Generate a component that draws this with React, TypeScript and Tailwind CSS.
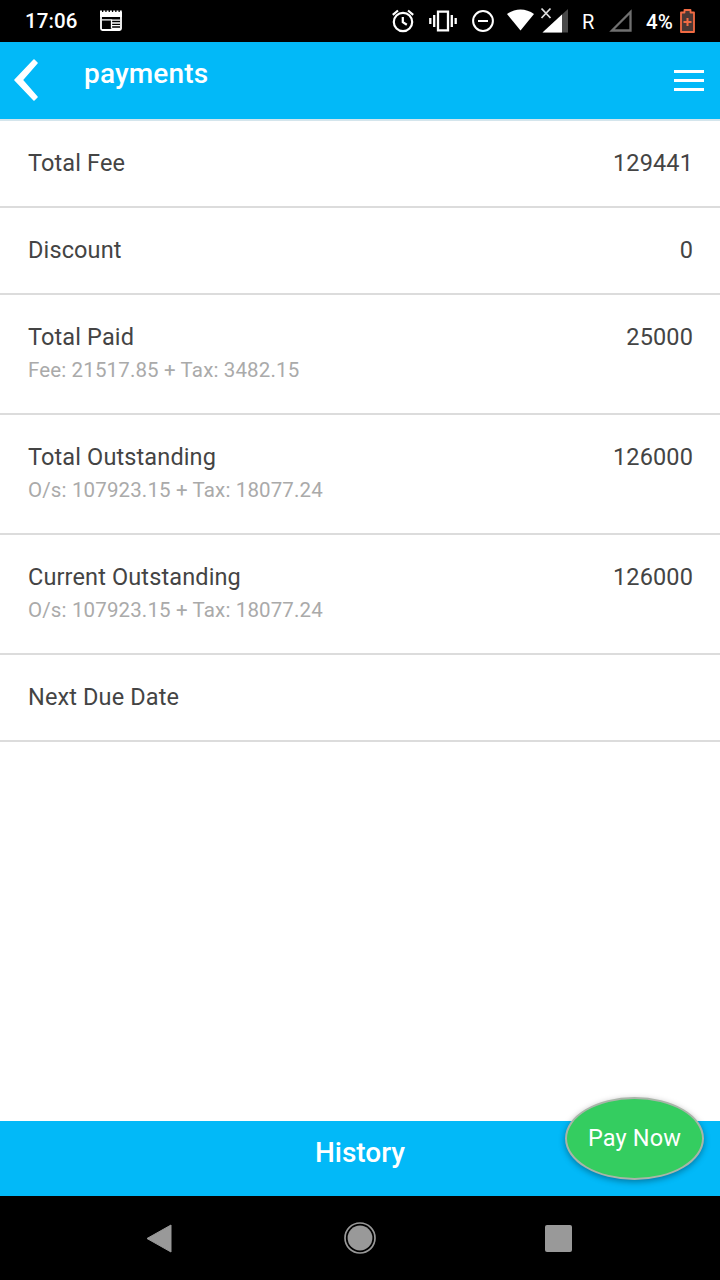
type FeeRow = {
  label: string;
  value?: string;
  detail?: string;
};

const rows: FeeRow[] = [
  { label: "Total Fee", value: "129441" },
  { label: "Discount", value: "0" },
  { label: "Total Paid", value: "25000", detail: "Fee: 21517.85 + Tax: 3482.15" },
  { label: "Total Outstanding", value: "126000", detail: "O/s: 107923.15 + Tax: 18077.24" },
  { label: "Current Outstanding", value: "126000", detail: "O/s: 107923.15 + Tax: 18077.24" },
  { label: "Next Due Date" },
];

function StatusBar() {
  return (
    <div className="flex h-[42px] items-center bg-black pl-[25px] text-[20.5px] font-medium text-white">
      <span className="mt-px w-[75px] tracking-[0.1px]">17:06</span>
      <svg className="-mt-px" width="22" height="21" viewBox="0 0 22 21" fill="none">
        <path d="M1 5v13.5A1.5 1.5 0 0 0 2.5 20h17a1.5 1.5 0 0 0 1.5-1.5V5" stroke="#fff" strokeWidth="1.8" />
        <path d="M0 2h22v5H0z" fill="#fff" />
        <path d="M0 1.2h22" stroke="#fff" strokeWidth="1.6" strokeDasharray="2 1.3" />
        <path d="M2 9.8h9.5v9M12 10.2h8M12 13h8M12 15.7h8M12 18.3h8" stroke="#fff" strokeWidth="1.3" />
      </svg>

      <div className="ml-auto flex h-full items-center">
        <svg className="mr-[15px]" width="22" height="24" viewBox="0 0 22 24" fill="none" stroke="#fff" strokeWidth="2.2">
          <circle cx="11" cy="13" r="9.2" />
          <path d="M.8 5.8L6 1.5M21.2 5.8L16 1.5M10.8 8v5.2l4 2.5" />
        </svg>
        <svg className="mr-[15px]" width="28" height="22" viewBox="0 0 28 22" fill="none" stroke="#fff" strokeWidth="2.3">
          <path d="M9 1.7h10v18.6H9zM5.2 5v12M1.3 8v6M22.8 5v12M26.7 8v6" />
        </svg>
        <svg className="mr-[13px]" width="22" height="22" viewBox="0 0 22 22" fill="none" stroke="#fff" strokeWidth="2">
          <circle cx="11" cy="11" r="9.9" />
          <path d="M6 11h10" />
        </svg>
        <svg className="mr-[6px] -mt-[2px]" width="27" height="22" viewBox="0 0 27 22" fill="#fff">
          <path d="M0 5C8-1 19-1 27 5L13.5 21.5z" />
        </svg>
        <svg className="mr-[13px] -mt-[2px]" width="29" height="26" viewBox="0 0 29 26">
          <path d="M2.5 25.5L28 2v23.5z" fill="#4a4a4a" />
          <path d="M2.5 25.5L22 7.5v18z" fill="#fff" />
          <path d="M1.5 1.5l9 9.5M10.5 1.5l-9 9.5" stroke="#ddd" strokeWidth="1.8" fill="none" />
        </svg>
        <span className="mr-[15px] mt-[2px] w-[12px] text-[20px] leading-none font-normal">R</span>
        <svg className="mr-[14px] -mt-[2px]" width="23" height="23" viewBox="0 0 23 23" fill="none">
          <path d="M3 21.5L21.5 3v18.5z" stroke="#707070" strokeWidth="2.3" />
        </svg>
        <span className="mt-[2px] w-[34px] text-[20.5px]">4%</span>
        <svg className="mr-[25px]" width="15" height="24" viewBox="0 0 15 24">
          <path d="M1 3.5h3.5V1h6v2.5H14V23H1z" fill="#4a3835" stroke="#f26b43" strokeWidth="1.8" strokeLinejoin="round" />
          <path d="M7.5 9v8M3.5 13h8" stroke="#f26b43" strokeWidth="2" />
        </svg>
      </div>
    </div>
  );
}

function Header() {
  return (
    <header className="flex h-[79px] border-b-2 border-[#d4e5ec] bg-[#02b9f8] text-white">
      <svg className="mt-[17px] ml-[14px]" width="25" height="43" viewBox="0 0 25 43">
        <path
          d="M20 1L1 21l19 20 3-3L8.2 21 23 4z"
          fill="#fff"
          stroke="#fff"
          strokeWidth="1.6"
          strokeLinejoin="round"
        />
      </svg>
      <h1 className="mt-[16px] ml-[45px] text-[28px] leading-8 font-medium tracking-[0.15px]">payments</h1>
      <button className="mt-7 mr-4 ml-auto flex h-[23px] w-[30px] flex-col gap-[6px]">
        <span className="h-[3px] w-full bg-white" />
        <span className="h-[3px] w-full bg-white" />
        <span className="h-[3px] w-full bg-white" />
      </button>
    </header>
  );
}

function Row({ label, value, detail }: FeeRow) {
  return (
    <li
      className={`flex justify-between border-b-2 border-[#dcdcdc] pt-[26px] pr-[27px] pl-7 text-[23.5px] leading-[33px] tracking-[0.13px] text-[#444] ${
        detail ? "h-[120px]" : "h-[87px]"
      }`}
    >
      <div>
        <p>{label}</p>
        {detail && <p className="text-[20.5px] tracking-[0.14px] text-[#aaa]">{detail}</p>}
      </div>
      <span>{value}</span>
    </li>
  );
}

function NavBar() {
  return (
    <nav className="flex h-[84px] items-center bg-black">
      <svg className="ml-[146px]" width="26" height="29" viewBox="0 0 26 29">
        <path d="M25 1v27L1 14.5z" fill="#999" stroke="#999" strokeLinejoin="round" />
      </svg>
      <svg className="ml-[172px]" width="32" height="32" viewBox="0 0 32 32">
        <circle cx="16" cy="16" r="15" fill="none" stroke="#999" strokeWidth="1.7" />
        <circle cx="16" cy="16" r="12.4" fill="#999" />
      </svg>
      <span className="ml-[169px] h-[27px] w-[27px] rounded-[2px] bg-[#999]" />
    </nav>
  );
}

export default function App() {
  return (
    <div className="flex h-[1280px] w-[720px] flex-col overflow-hidden bg-white font-[Roboto,sans-serif]">
      <StatusBar />
      <Header />
      <ul className="flex-1">
        {rows.map((row) => (
          <Row key={row.label} {...row} />
        ))}
      </ul>
      <footer className="relative flex h-[75px] justify-center bg-[#02b9f8] pt-4">
        <span className="text-[28px] leading-8 font-medium text-white">History</span>
        {/* floats over the edge of the footer */}
        <button className="absolute -top-6 right-4 h-[83px] w-[139px] rounded-[50%] border-2 border-[#a9b5a9] bg-[#34cd60] pt-px text-[23.5px] tracking-[0.15px] text-white shadow-[0_2px_6px_rgba(0,0,0,0.35)]">
          Pay Now
        </button>
      </footer>
      <NavBar />
    </div>
  );
}
